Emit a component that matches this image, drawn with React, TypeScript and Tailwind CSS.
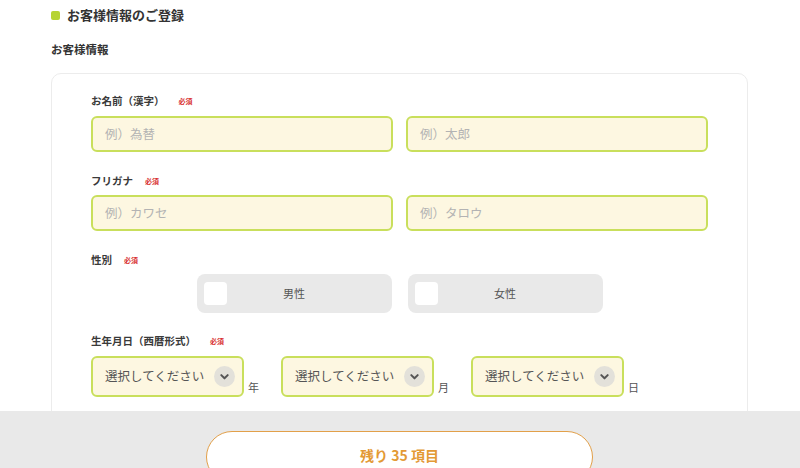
import React from "react";

const font = { fontFamily: '"Noto Sans CJK JP", "Noto Sans", sans-serif' };

function Label({ text, gap = 17 }: { text: string; gap?: number }) {
  return (
    <div className="flex items-center h-[14px]">
      <span className="text-[10.5px] font-bold text-[#3a3a3a] leading-[14px]">{text}</span>
      <span
        className="text-[7px] font-bold text-[#d83030] leading-[14px]"
        style={{ marginLeft: gap }}
      >
        必須
      </span>
    </div>
  );
}

function TextInput({ placeholder }: { placeholder: string }) {
  return (
    <div className="flex-1 h-[36px] rounded-[6px] border-2 border-[#c9df5c] bg-[#fdf7e1] flex items-center pl-[12px]">
      <span className="text-[12.5px] text-[#b3b3b3]">{placeholder}</span>
    </div>
  );
}

function Gender({ text }: { text: string }) {
  return (
    <div className="w-[195px] h-[39px] rounded-[8px] bg-[#e9e9e9] flex items-center pl-[7px] relative">
      <div className="w-[23px] h-[23px] rounded-[4px] bg-white" />
      <span className="flex-1 text-center pr-[30px] text-[11px] text-[#555]">{text}</span>
    </div>
  );
}

function Select({ suffix }: { suffix: string }) {
  return (
    <div className="flex items-end">
      <div className="w-[153px] h-[41px] rounded-[6px] border-2 border-[#c9df5c] bg-[#fdf7e1] flex items-center pl-[12px] pr-[7px] justify-between">
        <span className="text-[12.5px] text-[#555]">選択してください</span>
        <div className="w-[21px] h-[21px] rounded-full bg-[#e3e1da] flex items-center justify-center">
          <svg width="11" height="11" viewBox="0 0 12 12" fill="none">
            <path d="M2.5 4.5 L6 8 L9.5 4.5" stroke="#555" strokeWidth="2.2" strokeLinecap="round" strokeLinejoin="round" />
          </svg>
        </div>
      </div>
      <span className="ml-[4px] mb-[2px] text-[11px] leading-[16px] text-[#555]">{suffix}</span>
    </div>
  );
}

export default function App() {
  return (
    <div className="w-[800px] h-[468px] overflow-hidden relative bg-white" style={font}>
      <div className="pl-[51px]">
        <div className="h-[30px] flex items-center">
          <div className="w-[9px] h-[9px] rounded-[2px] bg-[#b6d434]" />
          <span className="ml-[7px] text-[13px] font-bold text-[#333]">お客様情報のご登録</span>
        </div>
        <div className="mt-[12px] h-[16px] flex items-center text-[11.5px] font-bold text-[#333]">お客様情報</div>
        <div className="mt-[15px] w-[697px] rounded-[10px] border border-[#ececec] pt-[20px] px-[39px] pb-[80px]">
          <Label text="お名前（漢字）" gap={14} />
          <div className="mt-[8px] flex gap-[13px]">
            <TextInput placeholder="例）為替" />
            <TextInput placeholder="例）太郎" />
          </div>
          <div className="mt-[22px]">
            <Label text="フリガナ" gap={12} />
          </div>
          <div className="mt-[7px] flex gap-[13px]">
            <TextInput placeholder="例）カワセ" />
            <TextInput placeholder="例）タロウ" />
          </div>
          <div className="mt-[22px]">
            <Label text="性別" gap={12} />
          </div>
          <div className="mt-[7px] flex justify-center gap-[16px]">
            <Gender text="男性" />
            <Gender text="女性" />
          </div>
          <div className="mt-[21px]">
            <Label text="生年月日（西暦形式）" gap={14} />
          </div>
          <div className="mt-[8px] flex gap-[22px]">
            <Select suffix="年" />
            <Select suffix="月" />
            <Select suffix="日" />
          </div>
        </div>
      </div>
      <div className="absolute left-0 right-0 top-[411px] bottom-0 bg-[#e9e9e9]">
        <div className="mt-[20px] ml-[206px] w-[387px] h-[52px] rounded-full border-[1.5px] border-[#e2a04a] bg-white flex items-center justify-center">
          <span className="text-[14px] font-bold text-[#e39a35] mt-[-4px]">残り 35 項目</span>
        </div>
      </div>
    </div>
  );
}
